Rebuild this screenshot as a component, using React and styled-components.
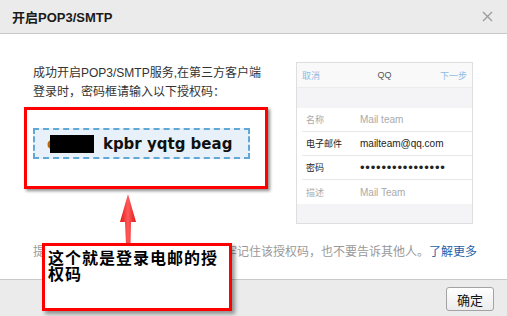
import React from 'react';
import styled, { createGlobalStyle } from 'styled-components';

const font = `"Liberation Sans", "Noto Sans CJK SC", sans-serif`;

const GlobalStyle = createGlobalStyle`
  html, body {
    margin: 0;
    background: #fff;
  }
`;

const Dialog = styled.div`
  position: relative;
  width: 507px;
  height: 316px;
  display: flex;
  flex-direction: column;
  font-family: ${font};
  overflow: hidden;
`;

const Header = styled.div`
  height: 33px;
  flex: none;
  display: flex;
  align-items: center;
  justify-content: space-between;
  padding: 0 14px 0 12px;
  background: #ebebeb;
  border-bottom: 1px solid #c9c9c9;
`;

const Title = styled.h3`
  margin: 0;
  font-size: 13px;
  font-weight: bold;
  color: #1a1a1a;
`;

const Close = styled.svg`
  width: 11px;
  height: 11px;
  display: block;
`;

const Body = styled.div`
  height: 245px;
  flex: none;
  box-sizing: border-box;
  padding: 28px 34px 0 33px;
  background: #fff;
`;

const Top = styled.div`
  display: flex;
`;

const Left = styled.div`
  width: 263px;
  flex: none;
  padding-top: 2px;
`;

const Intro = styled.p`
  margin: 0;
  font-size: 12px;
  line-height: 19px;
  color: #333;
`;

const CodeArea = styled.div`
  position: relative;
  width: 217px;
  margin-top: 26px;
`;

const CodeBox = styled.div`
  height: 31px;
  box-sizing: border-box;
  display: flex;
  align-items: center;
  padding-left: 12px;
  background: #e8f1f9;
  border: 2px dashed #62a8d6;
  font-family: "DejaVu Sans", sans-serif;
  font-weight: bold;
  font-size: 15px;
  color: #111;
  white-space: pre;
`;

const FirstChar = styled.span`
  color: #b8600f;
`;

const Mask = styled.span`
  display: inline-block;
  width: 44px;
  height: 18px;
  margin: 0 9px 0 -6px;
  background: #000;
`;

const RedFrame = styled.div`
  position: absolute;
  left: -9px;
  right: -18px;
  top: -21px;
  bottom: -30px;
  border: 3px solid #ff0000;
  box-shadow: 2px 2px 3px rgba(0, 0, 0, 0.45);
  pointer-events: none;
`;

const Panel = styled.div`
  width: 177px;
  height: 162px;
  box-sizing: border-box;
  display: flex;
  flex-direction: column;
  border: 1px solid #dedede;
  background: #f4f4f6;
`;

const PanelHead = styled.div`
  height: 24px;
  flex: none;
  display: flex;
  align-items: center;
  justify-content: space-between;
  padding: 0 5px;
  background: #f9f9f9;
  border-bottom: 1px solid #ececec;
  font-size: 9px;
`;

const HeadLink = styled.span`
  color: #8dbce6;
  width: 28px;
  text-align: ${(p) => (p.$right ? 'right' : 'left')};
`;

const HeadTitle = styled.span`
  color: #555;
  font-size: 9px;
`;

const Band = styled.div`
  height: 20px;
  flex: none;
`;

const Rows = styled.div`
  background: #fff;
  padding-left: 5px;
`;

const Row = styled.div`
  height: 24px;
  box-sizing: border-box;
  display: flex;
  align-items: center;
  padding-left: 4px;
  border-bottom: ${(p) => (p.$last ? 'none' : '1px solid #e8e8e8')};
`;

const Label = styled.span`
  width: 54px;
  flex: none;
  font-size: 9px;
  color: ${(p) => (p.$dark ? '#222' : '#aaa')};
`;

const Value = styled.span`
  font-size: 10px;
  color: ${(p) => (p.$dark ? '#222' : '#aaa')};
`;

const Dots = styled.span`
  font-size: 13px;
  letter-spacing: 0.8px;
  color: #222;
`;

const Tip = styled.p`
  margin: 19px 0 0;
  font-size: 12px;
  line-height: 19px;
  color: #999;
  white-space: nowrap;
`;

const More = styled.a`
  color: #1f5fa8;
  text-decoration: none;
`;

const Footer = styled.div`
  flex: 1;
  display: flex;
  justify-content: flex-end;
  align-items: flex-start;
  padding: 7px 13px 0 0;
  background: #ebebeb;
  border-top: 1px solid #c9c9c9;
`;

const Button = styled.button`
  width: 48px;
  height: 24px;
  padding: 0;
  border: 1px solid #a3a3a3;
  border-radius: 3px;
  background: linear-gradient(#ffffff, #ececec);
  font-family: ${font};
  font-size: 13px;
  color: #111;
`;

const Arrow = styled.svg`
  position: absolute;
  left: 112px;
  top: 190px;
  width: 32px;
  height: 56px;
`;

const Callout = styled.div`
  position: absolute;
  left: 42px;
  top: 243px;
  width: 190px;
  height: 68px;
  box-sizing: border-box;
  padding: 3px 8px 0 3px;
  background: #fff;
  border: 3px solid #ff0000;
  box-shadow: 3px 3px 4px rgba(0, 0, 0, 0.4);
  font-family: "Noto Sans CJK SC", sans-serif;
  font-weight: bold;
  font-size: 16px;
  line-height: 16px;
  letter-spacing: 1px;
  color: #000;
`;

const fields = [
  { label: '名称', value: 'Mail team' },
  { label: '电子邮件', value: 'mailteam@qq.com', dark: true },
  { label: '密码', dots: true, dark: true },
  { label: '描述', value: 'Mail Team' },
];

const App = () => (
  <Dialog>
    <GlobalStyle />
    <Header>
      <Title>开启POP3/SMTP</Title>
      <Close viewBox="0 0 11 11">
        <path d="M1 1L10 10M10 1L1 10" stroke="#9c9c9c" strokeWidth="1.4" />
      </Close>
    </Header>
    <Body>
      <Top>
        <Left>
          <Intro>
            成功开启POP3/SMTP服务,在第三方客户端
            <br />
            登录时，密码框请输入以下授权码：
          </Intro>
          <CodeArea>
            <CodeBox>
              <FirstChar>c</FirstChar>
              <Mask />
              kpbr yqtg beag
            </CodeBox>
            <RedFrame />
          </CodeArea>
        </Left>
        <Panel>
          <PanelHead>
            <HeadLink>取消</HeadLink>
            <HeadTitle>QQ</HeadTitle>
            <HeadLink $right>下一步</HeadLink>
          </PanelHead>
          <Band />
          <Rows>
            {fields.map((f, i) => (
              <Row key={f.label} $last={i === fields.length - 1}>
                <Label $dark={f.dark}>{f.label}</Label>
                {f.dots ? (
                  <Dots>••••••••••••••••</Dots>
                ) : (
                  <Value $dark={f.dark}>{f.value}</Value>
                )}
              </Row>
            ))}
          </Rows>
        </Panel>
      </Top>
      <Tip>
        提示：为保障您的邮箱帐号安全，请牢记住该授权码，也不要告诉其他人。
        <More href="#">了解更多</More>
      </Tip>
    </Body>
    <Footer>
      <Button type="button">确定</Button>
    </Footer>
    <Arrow viewBox="0 0 32 56">
      <defs>
        <linearGradient id="arrowFill" x1="0" x2="1" y1="0" y2="0">
          <stop offset="0" stopColor="#e01818" />
          <stop offset="0.5" stopColor="#ff5a5a" />
          <stop offset="1" stopColor="#e01818" />
        </linearGradient>
      </defs>
      <polygon
        points="16,4 24,32 19,32 18.5,55 14,55 13,32 8,32"
        fill="url(#arrowFill)"
      />
    </Arrow>
    <Callout>这个就是登录电邮的授权码</Callout>
  </Dialog>
);

export default App;
